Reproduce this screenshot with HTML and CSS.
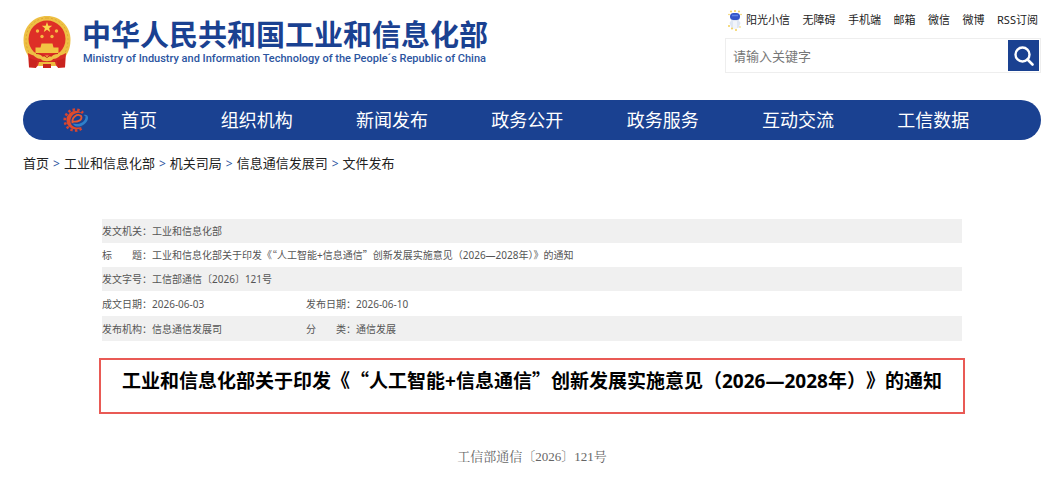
FILE: index.html
```html
<!DOCTYPE html>
<html lang="zh-CN">
<head>
<meta charset="utf-8">
<meta name="viewport" content="width=device-width, initial-scale=1">
<title>中华人民共和国工业和信息化部</title>
<link rel="stylesheet" href="styles.css">
</head>
<body>
<div class="page">
  <header class="header">
    <a class="brand" href="#">
      <svg class="emblem" viewBox="0 0 48 54" aria-hidden="true">
        <path d="M24 1C10.500 1 0.500 11.500 0.500 25c0 9 3.500 15 7.500 20h32c4-5 7.500-11 7.500-20C47.500 11.500 37.500 1 24 1z" fill="#eec044"/>
        <path d="M24 3C12 3 3 12.500 3 25c0 6 2 11 4 15" fill="none" stroke="#dfa834" stroke-width="1" stroke-dasharray="2 2"/>
        <path d="M24 3c12 0 21 9.500 21 22 0 6-2 11-4 15" fill="none" stroke="#dfa834" stroke-width="1" stroke-dasharray="2 2"/>
        <circle cx="24" cy="24" r="18.500" fill="#de2f27"/>
        <path d="M24 7l1.300 3.700 3.900.1-3.100 2.400 1.100 3.800-3.200-2.200-3.200 2.200 1.100-3.800-3.100-2.400 3.900-.1z" fill="#fbd54d"/>
        <g fill="#f6b942"><circle cx="14.500" cy="16" r="1.700"/><circle cx="33.500" cy="16" r="1.700"/><circle cx="19" cy="21.500" r="1.700"/><circle cx="29" cy="21.500" r="1.700"/></g>
        <path d="M18.500 28.500h11l1 4h5v5.500h-23v-5.500h5z" fill="#f2c443"/>
        <path d="M5 38c4 3 10 3 14 2.500h10c4 .5 10 .5 14-2.500l-1 14.500h-7l-3-3H16l-3 3H6z" fill="#d72c25"/>
        <path d="M9 37c4 1 8 2 11 5 2-2 6-2 8 0 3-3 7-4 11-5-1 4-5 7-9 7-1 3-11 3-12 0-4 0-8-3-9-7z" fill="#efc145"/>
        <path d="M13 38.500c5 0 8 2 11 4 3-2 6-4 11-4M11 46c5-1 8 3 13 3s8-4 13-3" fill="none" stroke="#c9231f" stroke-width="1"/>
        <path d="M16 47h16l1 4H15z" fill="#edba3f"/>
        <path d="M6 43l8 3-1 7-7-1zM42 43l-8 3 1 7 7-1zM20 49h8v4h-8z" fill="#c9231f"/>
      </svg>
      <span class="brand-text">
        <span class="brand-name">中华人民共和国工业和信息化部</span>
        <span class="brand-en" lang="en">Ministry of Industry and Information Technology of the People´s Republic of China</span>
      </span>
    </a>
    <div class="tools">
      <nav class="quick" aria-label="快捷入口">
        <a class="quick-bot" href="#">
          <svg class="bot" viewBox="0 0 14 21" aria-hidden="true">
            <path d="M4 9h6l2.500 4-2 5h-7l-2-5z" fill="#dfe6f3"/>
            <path d="M5 11h4v8H5z" fill="#f1f4fa"/>
            <rect x="2" y="3" width="10" height="7" rx="3.500" fill="#3455c8"/>
            <path d="M4 5.500h6" stroke="#5f83e6" stroke-width="1.500"/>
            <g fill="#f2cf59"><circle cx="3" cy="1.500" r="1"/><circle cx="7" cy="1" r="1"/><circle cx="11" cy="1.500" r="1"/><circle cx="1" cy="4.500" r=".8"/><circle cx="13" cy="4.500" r=".8"/><circle cx="1" cy="16" r="1"/><circle cx="4" cy="18.500" r="1"/><circle cx="8" cy="20" r="1"/><circle cx="12" cy="17" r=".8"/></g>
          </svg>阳光小信</a>
        <a href="#">无障碍</a>
        <a href="#">手机端</a>
        <a href="#">邮箱</a>
        <a href="#">微信</a>
        <a href="#">微博</a>
        <a href="#">RSS订阅</a>
      </nav>
      <form class="search" role="search">
        <input class="search-input" type="text" placeholder="请输入关键字" aria-label="请输入关键字">
        <button class="search-button" type="button" aria-label="搜索">
          <svg class="search-icon" viewBox="0 0 20 20" aria-hidden="true"><circle cx="8.500" cy="8.500" r="7" fill="none" stroke="#fff" stroke-width="2.400"/><path d="M13.500 13.500l5 5" stroke="#fff" stroke-width="2.600" stroke-linecap="round"/></svg>
        </button>
      </form>
    </div>
  </header>

  <nav class="menu" aria-label="主导航">
    <svg class="gear" viewBox="0 0 26 26" aria-hidden="true">
      <path d="M18.500 21.500A10.500 10.500 0 1 1 20 6" fill="none" stroke="#d8452f" stroke-width="2.600" stroke-dasharray="2.400 2.200"/>
      <path d="M19.500 19.500A9.300 9.300 0 1 1 19.500 6.800C17 4.800 12 5.500 9.500 8.500c-3.500 4-2.500 10 2 11.500 3 .9 6 .5 8-.5z" fill="#e04a2b"/>
      <path d="M10 14.500c4 .8 8.500-1 8.500-4 0-2.800-4-3.300-6.500-1.300-2.300 1.800-3 4.500-2.500 7" fill="none" stroke="#e9582f" stroke-width="1.800"/>
      <path d="M10 16.500c6 1.800 13-1.500 12.500-7.300l-2-1.200c3-.8 5 .5 4.500 3.500-.8 5-6.500 8.500-11 8-2.200-.3-3.500-1.300-4-3z" fill="#2f7fc9"/>
    </svg>
    <a href="#">首页</a>
    <a href="#">组织机构</a>
    <a href="#">新闻发布</a>
    <a href="#">政务公开</a>
    <a href="#">政务服务</a>
    <a href="#">互动交流</a>
    <a href="#">工信数据</a>
  </nav>

  <nav class="crumbs" aria-label="当前位置">
    <a href="#">首页</a><span class="sep">&gt;</span><a href="#">工业和信息化部</a><span class="sep">&gt;</span><a href="#">机关司局</a><span class="sep">&gt;</span><a href="#">信息通信发展司</a><span class="sep">&gt;</span><a href="#">文件发布</a>
  </nav>

  <main class="article">
    <table class="info">
      <tr><th scope="row">发文机关：</th><td colspan="3">工业和信息化部</td></tr>
      <tr><th scope="row">标　　题：</th><td colspan="3">工业和信息化部关于印发《<span class="cjk">“</span>人工智能+信息通信<span class="cjk">”</span>创新发展实施意见（2026—2028年）》的通知</td></tr>
      <tr><th scope="row">发文字号：</th><td colspan="3">工信部通信〔2026〕121号</td></tr>
      <tr><th scope="row">成文日期：</th><td class="short">2026-06-03</td><th scope="row">发布日期：</th><td>2026-06-10</td></tr>
      <tr><th scope="row">发布机构：</th><td class="short">信息通信发展司</td><th scope="row">分　　类：</th><td>通信发展</td></tr>
    </table>
    <h1 class="title">工业和信息化部关于印发《<span class="cjk">“</span>人工智能+信息通信<span class="cjk">”</span>创新发展实施意见（2026—2028年）》的通知</h1>
    <p class="number">工信部通信〔2026〕121号</p>
  </main>
</div>
</body>
</html>
```
FILE: styles.css
```css
* { box-sizing: border-box; }

body {
  margin: 0;
  background: #fff;
  color: #333;
  font-family: "Noto Sans", "Noto Sans CJK SC", sans-serif;
}

a { color: inherit; text-decoration: none; }

.cjk { font-family: "Noto Sans CJK SC", sans-serif; }

.page { padding: 8px 21px 0 23px; }

.header {
  display: flex;
  justify-content: space-between;
  align-items: flex-start;
  height: 92px;
}

.brand {
  display: flex;
  align-items: flex-start;
  gap: 11px;
  padding-top: 7px;
  color: #1a4191;
  white-space: nowrap;
}

.emblem { width: 48px; height: 54px; }
.brand-text { display: flex; flex-direction: column; padding-top: 3px; }
.brand-name { font-size: 29px; font-weight: 700; line-height: 34px; }
.brand-en {
  padding-left: 1px;
  font-family: Roboto, sans-serif;
  font-size: 11px;
  font-weight: 500;
  line-height: 14px;
  color: #2c559f;
}

.tools { width: 316px; }

.quick {
  display: flex;
  justify-content: space-between;
  align-items: center;
  height: 24px;
  padding: 0 3px;
  font-size: 11px;
  line-height: 16px;
  color: #222;
  white-space: nowrap;
}

.quick-bot { display: flex; align-items: center; gap: 4px; }
.bot { width: 14px; height: 21px; }

.search {
  display: flex;
  margin-top: 6px;
  padding: 1px;
  border: 1px solid #eee;
}

.search-input {
  flex: 1;
  min-width: 0;
  padding: 0 6px;
  border: 0;
  outline: 0;
  font-family: inherit;
  font-size: 13px;
  color: #333;
}

.search-input::placeholder { color: #777; opacity: 1; }

.search-button {
  display: flex;
  align-items: center;
  justify-content: center;
  width: 31px;
  height: 31px;
  padding: 0;
  border: 0;
  background: #1a4191;
}

.search-icon { width: 20px; height: 20px; }

.menu {
  display: grid;
  grid-template-columns: 66px 100px repeat(6, 1fr);
  align-items: center;
  height: 40px;
  padding-right: 40px;
  border-radius: 20px;
  background: #1a4191;
  color: #fff;
  font-size: 18px;
  line-height: 24px;
  text-align: center;
  white-space: nowrap;
}

.gear { width: 26px; height: 26px; margin-left: 40px; }

.crumbs {
  padding-top: 13px;
  font-size: 13px;
  line-height: 20px;
  color: #222;
}

.sep { padding: 0 4px; font-size: 12px; color: #2c559f; }

.article { padding: 45px 76px 0; }

.info {
  width: calc(100% - 6px);
  margin: 0 3px;
  border-collapse: collapse;
  font-size: 10px;
  line-height: 16px;
  color: #555;
}

.info tr { height: 24px; }
.info tr:nth-child(n+4) { height: 25px; }
.info tr:nth-child(odd) { background: #f0f0f0; }
.info th, .info td { padding: 0; text-align: left; font-weight: 400; }
.info th { width: 50px; white-space: nowrap; }
.info .short { width: 154px; }

.title {
  margin: 17px 0 0;
  padding: 6px 0 17px;
  border: 2px solid #e95a55;
  color: #000;
  font-size: 19px;
  font-weight: 700;
  line-height: 28px;
  text-align: center;
  text-spacing-trim: space-all;
}

.number {
  margin: 33px 0 0;
  font-family: "Liberation Serif", "Noto Serif CJK SC", "Noto Sans CJK SC", serif;
  font-size: 13px;
  line-height: 20px;
  color: #666;
  text-align: center;
}
```
